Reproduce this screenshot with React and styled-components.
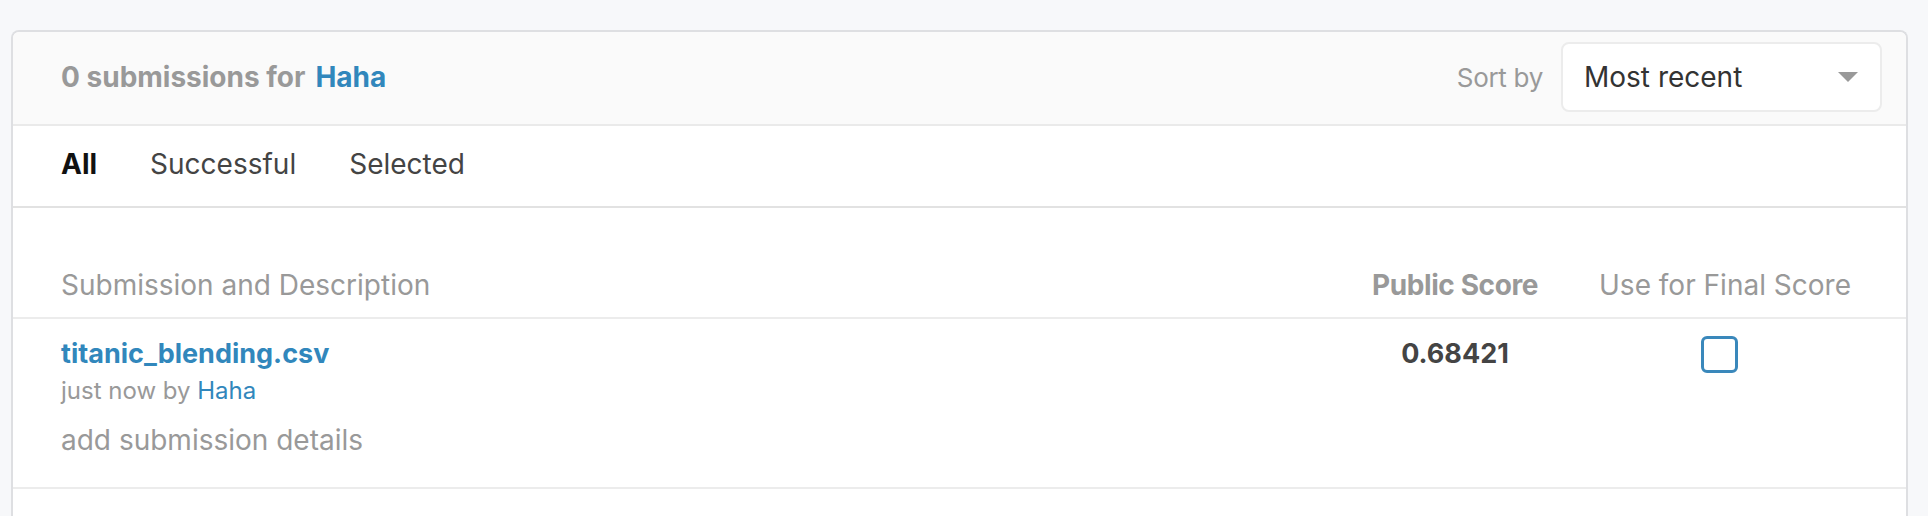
import React from 'react';
import styled, { createGlobalStyle } from 'styled-components';

const GlobalStyle = createGlobalStyle`
    html, body {
        margin: 0;
        padding: 0;
        background: #f7f8fa;
        font-family: Inter, 'Noto Sans', 'Liberation Sans', sans-serif;
    }
`;

const Page = styled.div`
    padding: 30px 20px 0 11px;
    height: 516px;
    box-sizing: border-box;
    overflow: hidden;
`;

const Card = styled.section`
    background: #fff;
    border: 2px solid #dedfe2;
    border-bottom: none;
    border-radius: 8px 8px 0 0;
    min-height: 600px;
    overflow: hidden;
`;

const Header = styled.header`
    height: 94px;
    box-sizing: border-box;
    background: #fafafa;
    border-bottom: 2px solid #eaeaea;
    padding: 0 24px 2px 48px;
    display: flex;
    align-items: center;
    justify-content: space-between;
`;

const Title = styled.h1`
    margin: 0;
    font-size: 28px;
    line-height: 34px;
    font-weight: 700;
    color: #999;
`;

const Link = styled.a`
    color: #3187bc;
    font-weight: ${(props) => (props.$bold ? 700 : 400)};
    text-decoration: none;
    margin-left: ${(props) => props.$gap || 0}px;
`;

const SortGroup = styled.div`
    display: flex;
    align-items: center;
    gap: 18px;
`;

const SortLabel = styled.span`
    font-size: 26px;
    color: #999;
    letter-spacing: -0.3px;
`;

const Select = styled.div`
    width: 321px;
    height: 70px;
    box-sizing: border-box;
    background: #fff;
    border: 2px solid #ececec;
    border-radius: 8px;
    padding: 0 22px 0 21px;
    display: flex;
    align-items: center;
    justify-content: space-between;
    font-size: 28px;
    color: #333;
`;

const Caret = styled.span`
    width: 0;
    height: 0;
    border-left: 10px solid transparent;
    border-right: 10px solid transparent;
    border-top: 10px solid #999;
`;

const TabBar = styled.nav`
    height: 82px;
    box-sizing: border-box;
    border-bottom: 2px solid #e2e2e2;
    padding: 0 0 4px 48px;
    display: flex;
    align-items: center;
    gap: 53px;
`;

const Tab = styled.span`
    font-size: 28px;
    line-height: 34px;
    font-weight: ${(props) => (props.$active ? 700 : 400)};
    color: ${(props) => (props.$active ? '#111' : '#444')};
`;

const Table = styled.div`
    padding-top: 0;
`;

const HeadRow = styled.div`
    height: 111px;
    box-sizing: border-box;
    display: grid;
    grid-template-columns: 1fr 172px 252px;
    column-gap: 58px;
    align-items: end;
    padding: 0 55px 14px 48px;
    border-bottom: 2px solid #ececec;
`;

const HeadCell = styled.div`
    font-size: 28px;
    line-height: 36px;
    color: #999;
    font-weight: ${(props) => (props.$bold ? 700 : 400)};
    text-align: ${(props) => props.$align || 'left'};
    white-space: nowrap;
    letter-spacing: ${(props) => (props.$bold ? '-0.4px' : '0')};
`;

const Row = styled.div`
    display: grid;
    grid-template-columns: 1fr 172px 252px;
    column-gap: 58px;
    align-items: start;
    padding: 18px 55px 29px 48px;
    border-bottom: 2px solid #ececec;
`;

const FileName = styled.a`
    display: block;
    font-size: 27px;
    line-height: 34px;
    font-weight: 700;
    color: #3187bc;
    text-decoration: none;
`;

const Meta = styled.div`
    margin-top: 5px;
    font-size: 24px;
    line-height: 30px;
    color: #999;
`;

const Details = styled.div`
    margin-top: 16px;
    font-size: 28px;
    line-height: 36px;
    color: #999;
`;

const Score = styled.div`
    font-size: 27px;
    line-height: 34px;
    font-weight: 700;
    color: #444;
    text-align: center;
`;

const CheckCell = styled.div`
    display: flex;
    justify-content: center;
    padding-right: 12px;
`;

const Checkbox = styled.span`
    display: block;
    width: 37px;
    height: 37px;
    margin-top: -1px;
    box-sizing: border-box;
    border: 3px solid #3a88bb;
    border-radius: 6px;
    background: #fff;
`;

const submissions = [
    {
        file: 'titanic_blending.csv',
        when: 'just now',
        user: 'Haha',
        score: '0.68421',
    },
];

const App = () => {
    return (
        <Page>
            <GlobalStyle />
            <Card>
                <Header>
                    <Title>
                        0 submissions for
                        <Link $bold $gap={10}>Haha</Link>
                    </Title>
                    <SortGroup>
                        <SortLabel>Sort by</SortLabel>
                        <Select>
                            Most recent
                            <Caret />
                        </Select>
                    </SortGroup>
                </Header>
                <TabBar>
                    <Tab $active>All</Tab>
                    <Tab>Successful</Tab>
                    <Tab>Selected</Tab>
                </TabBar>
                <Table>
                    <HeadRow>
                        <HeadCell>Submission and Description</HeadCell>
                        <HeadCell $bold $align='center'>Public Score</HeadCell>
                        <HeadCell $align='center'>Use for Final Score</HeadCell>
                    </HeadRow>
                    {submissions.map((s) => (
                        <Row key={s.file}>
                            <div>
                                <FileName>{s.file}</FileName>
                                <Meta>
                                    {s.when} by <Link>{s.user}</Link>
                                </Meta>
                                <Details>add submission details</Details>
                            </div>
                            <Score>{s.score}</Score>
                            <CheckCell>
                                <Checkbox />
                            </CheckCell>
                        </Row>
                    ))}
                </Table>
            </Card>
        </Page>
    );
};

export default App;
